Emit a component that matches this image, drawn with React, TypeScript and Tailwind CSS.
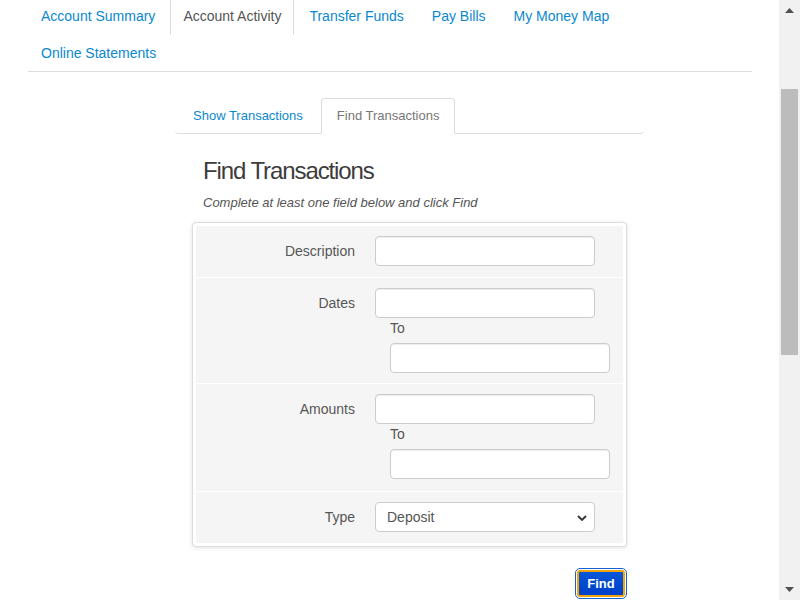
import React from "react";

const font = "font-['Liberation_Sans',Arial,Helvetica,sans-serif]";

function TopNav() {
  const items = [
    { label: "Account Summary", active: false },
    { label: "Account Activity", active: true },
    { label: "Transfer Funds", active: false },
    { label: "Pay Bills", active: false },
    { label: "My Money Map", active: false },
    { label: "Online Statements", active: false },
  ];
  return (
    <ul className="ml-[28px] mt-[-3px] flex w-[724px] flex-wrap border-b border-[#ddd]">
      {items.map((it) => (
        <li key={it.label} className="mb-[-1px] mr-[2px]">
          <a
            className={
              it.active
                ? "block rounded-t-[4px] border border-[#ddd] border-b-transparent bg-white px-3 py-2 text-[14px] leading-5 text-[#555]"
                : "block rounded-t-[4px] border border-transparent px-3 py-2 text-[14px] leading-5 text-[#0a88cf]"
            }
          >
            {it.label}
          </a>
        </li>
      ))}
    </ul>
  );
}

function SubNav() {
  return (
    <ul className="ml-[175px] mt-[26px] flex w-[469px] rounded-b-[4px] border-b border-[#ddd] pl-[2px]">
      <li className="mb-[-1px] mr-[2px]">
        <a className="block rounded-t-[4px] border border-transparent px-[15px] py-2 text-[13px] leading-[18px] text-[#0a88cf]">
          Show Transactions
        </a>
      </li>
      <li className="mb-[-1px] mr-[2px]">
        <a className="block rounded-t-[4px] border border-[#ddd] border-b-transparent bg-white px-[15px] py-2 text-[13px] leading-[18px] text-[#777]">
          Find Transactions
        </a>
      </li>
    </ul>
  );
}

function TextInput({ indent = false }: { indent?: boolean }) {
  return (
    <input
      type="text"
      className={
        "block h-[30px] w-[220px] rounded-[4px] border border-[#ccc] bg-white px-2 text-[14px] shadow-[inset_0_1px_1px_rgba(0,0,0,0.075)] outline-none " +
        (indent ? "ml-[15px]" : "")
      }
    />
  );
}

function Row({
  label,
  children,
  first = false,
  pad,
}: {
  label: string;
  children: React.ReactNode;
  first?: boolean;
  pad: string;
}) {
  return (
    <div
      className={
        "flex bg-[#f5f5f5] " + pad + " " + (first ? "" : "border-t border-white")
      }
    >
      <div className="w-[159px] text-right text-[14px] leading-[30px] text-[#555]">
        {label}
      </div>
      <div className="ml-[20px]">{children}</div>
    </div>
  );
}

function RangeField() {
  return (
    <div>
      <TextInput />
      <div className="ml-[15px] mb-[5px] text-[14px] leading-[20px] text-[#555]">
        To
      </div>
      <TextInput indent />
    </div>
  );
}

function ScrollBar() {
  return (
    <div className="flex h-[600px] w-[21px] flex-col bg-[#f1f1f1]">
      <div className="flex h-[21px] items-center justify-center">
        <svg width="9" height="5" viewBox="0 0 9 5">
          <path d="M4.5 0 L9 5 L0 5 Z" fill="#505050" />
        </svg>
      </div>
      <div className="mx-[2px] mt-[68px] h-[266px] bg-[#bcbcbc]" />
      <div className="flex-1" />
      <div className="flex h-[21px] items-center justify-center">
        <svg width="9" height="5" viewBox="0 0 9 5">
          <path d="M0 0 L9 0 L4.5 5 Z" fill="#505050" />
        </svg>
      </div>
    </div>
  );
}

export default function App() {
  return (
    <div className={"flex h-[600px] w-[800px] overflow-hidden bg-white " + font}>
      <div className="w-[779px] overflow-hidden">
        <TopNav />
        <SubNav />
        <h1 className="ml-[203px] mt-[24px] text-[24px] font-normal leading-[26px] tracking-[-1.1px] text-[#3c3c3c]">
          Find Transactions
        </h1>
        <p className="ml-[203px] mt-[11px] text-[13px] italic leading-[16px] text-[#555]">
          Complete at least one field below and click Find
        </p>
        <div className="ml-[192px] mt-[11px] w-[435px] rounded-[4px] border border-[#ddd] bg-white p-[3px] shadow-[0_1px_4px_rgba(0,0,0,0.12)]">
          <Row label="Description" first pad="pt-[10px] pb-[11px]">
            <TextInput />
          </Row>
          <Row label="Dates" pad="pt-[10px] pb-[10px]">
            <RangeField />
          </Row>
          <Row label="Amounts" pad="pt-[10px] pb-[12px]">
            <RangeField />
          </Row>
          <Row label="Type" pad="pt-[10px] pb-[11px]">
            <div className="relative w-[220px]">
              <select className="block h-[30px] w-[220px] appearance-none rounded-[4px] border border-[#ccc] bg-white pl-[11px] text-[14px] text-[#555] outline-none">
                <option>Deposit</option>
                <option>Withdrawal</option>
                <option>Any</option>
              </select>
              <svg
                className="pointer-events-none absolute right-[8px] top-[13px]"
                width="10"
                height="6"
                viewBox="0 0 10 6"
              >
                <path d="M1 1 L5 5 L9 1" stroke="#333" strokeWidth="1.8" fill="none" />
              </svg>
            </div>
          </Row>
        </div>
        <div className="ml-[575px] mt-[21px] w-[52px] rounded-[5px] border border-[#1a5fd0] p-[1px]">
          <button className="block h-[27px] w-full rounded-[3px] border-2 border-[#f0a30a] bg-gradient-to-b from-[#0856d8] to-[#0040c8] text-[13px] font-bold leading-[20px] text-white">
            Find
          </button>
        </div>
      </div>
      <ScrollBar />
    </div>
  );
}
